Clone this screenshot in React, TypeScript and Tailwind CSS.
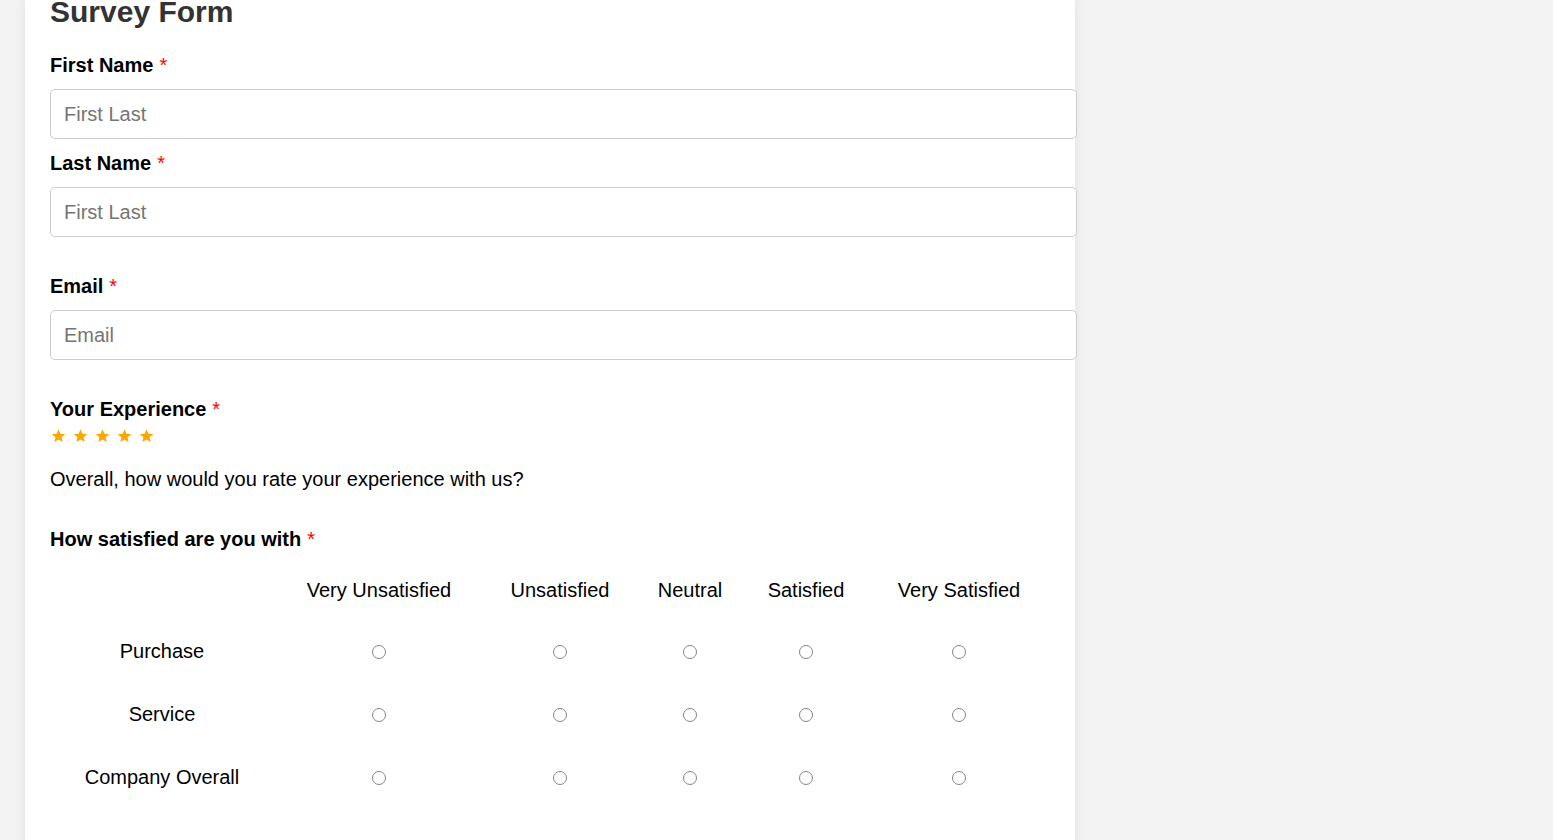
import React from "react";

const cols = ["Very Unsatisfied", "Unsatisfied", "Neutral", "Satisfied", "Very Satisfied"];
const rows = ["Purchase", "Service", "Company Overall"];

function Req() {
  return <span className="ml-[6px] font-normal text-[#ff0000]">*</span>;
}

function Field({ label, placeholder, mt, imt }: { label: string; placeholder: string; mt: string; imt: string }) {
  return (
    <>
      <label className={`block text-[20px] font-bold leading-[23px] text-black ${mt}`}>
        {label}
        <Req />
      </label>
      <input
        type="text"
        placeholder={placeholder}
        className={`block h-[50px] w-[1027px] rounded-[5px] border border-[#cccccc] bg-white px-[13px] text-[20px] text-black placeholder:text-[#757575] outline-none ${imt}`}
      />
    </>
  );
}

function Star() {
  return (
    <svg width="15" height="14" viewBox="0 0 24 23" className="block">
      <path d="M12 0.5l3.09 7.36 7.91.64-6.02 5.17 1.84 7.73L12 17.27 5.18 21.4l1.84-7.73L1 8.5l7.91-.64z" fill="#ffa500" />
    </svg>
  );
}

export default function App() {
  return (
    <div className="min-h-screen overflow-hidden bg-[#f3f3f3] font-['Liberation_Sans',Arial,sans-serif]">
      <div className="ml-[25px] min-h-[900px] w-[1050px] bg-white px-[25px] pb-10 shadow-[0_0_12px_rgba(0,0,0,0.08)]">
        <h1 className="mt-[-3px] text-[30px] font-bold leading-[30px] text-[#333333]">Survey Form</h1>
        <Field label="First Name" placeholder="First Last" mt="mt-[27px]" imt="mt-[12px]" />
        <Field label="Last Name" placeholder="First Last" mt="mt-[13px]" imt="mt-[12px]" />
        <Field label="Email" placeholder="Email" mt="mt-[38px]" imt="mt-[12px]" />
        <label className="mt-[38px] block text-[20px] font-bold leading-[23px] text-black">
          Your Experience
          <Req />
        </label>
        <div className="mt-[8px] flex h-[14px] items-center">
          {[0, 1, 2, 3, 4].map((i) => (
            <span key={i} className="w-[22px] pl-[1px]">
              <Star />
            </span>
          ))}
        </div>
        <p className="mt-[25px] text-[20px] leading-[23px] text-black">
          Overall, how would you rate your experience with us?
        </p>
        <label className="mt-[37px] block text-[20px] font-bold leading-[23px] text-black">
          How satisfied are you with
          <Req />
        </label>
        <div className="mt-[9px] grid grid-cols-[224px_210px_152px_108px_124px_182px] text-[20px] leading-[23px] text-black">
          <div className="h-[60px]" />
          {cols.map((c) => (
            <div key={c} className="flex h-[60px] items-center justify-center">
              {c}
            </div>
          ))}
          {rows.map((r) => (
            <React.Fragment key={r}>
              <div className="flex h-[63px] items-center justify-center">{r}</div>
              {cols.map((c) => (
                <div key={c} className="flex h-[63px] items-center justify-center">
                  <input
                    type="radio"
                    name={r}
                    className="m-0 h-[14px] w-[14px] appearance-none rounded-full border border-[#858585] bg-white"
                  />
                </div>
              ))}
            </React.Fragment>
          ))}
        </div>
      </div>
    </div>
  );
}
